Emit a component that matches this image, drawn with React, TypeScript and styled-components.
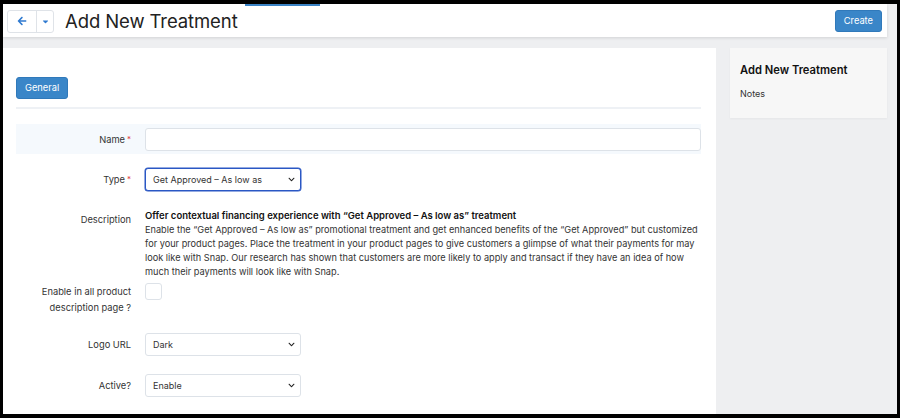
import styled, { createGlobalStyle } from 'styled-components';
import { FaArrowLeft, FaCaretDown, FaChevronDown } from 'react-icons/fa';

const GlobalStyle = createGlobalStyle`
  html, body {
    margin: 0;
    padding: 0;
    background: #000;
  }
  * {
    box-sizing: border-box;
  }
  body {
    font-family: Inter, 'Liberation Sans', Arial, sans-serif;
    color: #222;
  }
`;

interface SelectProps {
  value: string;
  focused?: boolean;
}

const Select = ({ value, focused }: SelectProps) => (
  <SelectWrapper>
    <SelectBox $focused={focused}>{value}</SelectBox>
    <Chevron>
      <FaChevronDown />
    </Chevron>
  </SelectWrapper>
);

const App = () => {
  return (
    <>
      <GlobalStyle />
      <Frame>
        <Header>
          <ActiveTab />
          <NavGroup>
            <NavButton $wide>
              <FaArrowLeft />
            </NavButton>
            <NavButton>
              <FaCaretDown />
            </NavButton>
          </NavGroup>
          <Title>Add New Treatment</Title>
          <PrimaryButton $right>Create</PrimaryButton>
        </Header>
        <Body>
          <MainCard>
            <TabBar>
              <PrimaryButton>General</PrimaryButton>
            </TabBar>
            <Divider />
            <FormRow $highlight $height={30} $gapTop={15}>
              <Label>
                Name<Required>*</Required>
              </Label>
              <TextInput />
            </FormRow>
            <FormRow $height={50}>
              <Label>
                Type<Required>*</Required>
              </Label>
              <Select value="Get Approved – As low as" focused />
            </FormRow>
            <FormRow $top $gapTop={5}>
              <Label $pad={3}>Description</Label>
              <Description>
                <strong>
                  Offer contextual financing experience with “Get Approved – As low as” treatment
                </strong>
                <p>
                  Enable the “Get Approved – As low as” promotional treatment and get enhanced
                  benefits of the “Get Approved” but customized for your product pages. Place the
                  treatment in your product pages to give customers a glimpse of what their payments
                  for may look like with Snap. Our research has shown that customers are more likely
                  to apply and transact if they have an idea of how much their payments will look
                  like with Snap.
                </p>
              </Description>
            </FormRow>
            <FormRow $top $gapTop={4}>
              <Label $pad={1} $lineHeight={16}>
                Enable in all product
                <br />
                description page ?
              </Label>
              <Checkbox />
            </FormRow>
            <FormRow $height={41} $gapTop={8}>
              <Label>Logo URL</Label>
              <Select value="Dark" />
            </FormRow>
            <FormRow $height={41}>
              <Label>Active?</Label>
              <Select value="Enable" />
            </FormRow>
          </MainCard>
          <SidePanel>
            <SideTitle>Add New Treatment</SideTitle>
            <SideText>Notes</SideText>
          </SidePanel>
        </Body>
      </Frame>
    </>
  );
};

export default App;

const Frame = styled.div`
  width: 900px;
  height: 418px;
  border-style: solid;
  border-color: #000;
  border-width: 4px 3px 4px 3px;
  background: #eeeff1;
  overflow: hidden;
  display: flex;
  flex-direction: column;
`;

const Header = styled.div`
  position: relative;
  height: 33px;
  margin-right: 10px;
  background: #fff;
  box-shadow: 0 1px 3px rgba(0, 0, 0, 0.12);
  display: flex;
  align-items: center;
  padding: 0 5px 0 4px;
  flex-shrink: 0;
`;

// blue underline of the active top tab
const ActiveTab = styled.div`
  position: absolute;
  top: 0;
  left: 242px;
  width: 75px;
  height: 2px;
  background: #3a82c4;
`;

const NavGroup = styled.div`
  display: flex;
  height: 23px;
  border: 1px solid #dfe3e8;
  border-radius: 3px;
  margin-top: 1px;
`;

const NavButton = styled.div<{ $wide?: boolean }>`
  width: ${(p) => (p.$wide ? '28px' : '17px')};
  display: flex;
  align-items: center;
  justify-content: center;
  color: #2f7ad0;
  font-size: ${(p) => (p.$wide ? '10px' : '9px')};
  & + & {
    border-left: 1px solid #dfe3e8;
  }
`;

const Title = styled.h1`
  margin: 0 0 0 11px;
  font-size: 18.5px;
  font-weight: 400;
  color: #222;
  letter-spacing: -0.1px;
`;

const PrimaryButton = styled.button<{ $right?: boolean }>`
  ${(p) => (p.$right ? 'margin-left: auto;' : '')}
  padding: 0 8px;
  height: 22px;
  background: #3a86c8;
  border: 1px solid #3079ba;
  border-radius: 3px;
  color: #fff;
  font-family: inherit;
  font-size: 9.3px;
  line-height: 20px;
`;

const Body = styled.div`
  flex: 1;
  display: flex;
  gap: 14px;
  padding-top: 11px;
  padding-right: 10px;
  min-height: 0;
`;

const MainCard = styled.div`
  width: 713px;
  background: #fff;
  padding: 29px 15px 0 13px;
  flex-shrink: 0;
`;

const TabBar = styled.div`
  display: flex;
`;

const Divider = styled.div`
  margin-top: 8px;
  height: 2px;
  background: #eef1f5;
`;

const FormRow = styled.div<{ $highlight?: boolean; $height?: number; $top?: boolean; $gapTop?: number }>`
  display: grid;
  grid-template-columns: 129px 1fr;
  align-items: ${(p) => (p.$top ? 'start' : 'center')};
  ${(p) => (p.$height ? `height: ${p.$height}px;` : '')}
  background: ${(p) => (p.$highlight ? '#f5f9fd' : 'transparent')};
  margin-top: ${(p) => p.$gapTop ?? 0}px;
`;

const Label = styled.div<{ $pad?: number; $lineHeight?: number }>`
  text-align: right;
  padding-right: 14px;
  padding-top: ${(p) => p.$pad ?? 0}px;
  font-size: 9.3px;
  line-height: ${(p) => p.$lineHeight ?? 15}px;
  color: #333;
`;

const Required = styled.span`
  color: #e0393e;
  font-size: 8px;
  margin-left: 2px;
  vertical-align: top;
`;

const TextInput = styled.div`
  width: 556px;
  height: 23px;
  border: 1px solid #dde2e8;
  border-radius: 3px;
  background: #fff;
`;

const SelectWrapper = styled.div`
  position: relative;
  width: 156px;
`;

const SelectBox = styled.div<{ $focused?: boolean }>`
  height: 23px;
  padding: 0 7px;
  border: 1px solid ${(p) => (p.$focused ? '#2a57c4' : '#dde2e8')};
  box-shadow: ${(p) => (p.$focused ? '0 0 0 0.5px #2a57c4' : 'none')};
  border-radius: 3px;
  background: #fff;
  font-size: 9px;
  line-height: 21px;
  color: #333;
`;

const Chevron = styled.span`
  position: absolute;
  right: 6px;
  top: 8px;
  font-size: 7px;
  color: #222;
  line-height: 1;
`;

const Description = styled.div`
  width: 560px;
  font-size: 9.2px;
  line-height: 14px;
  color: #333;
  & > strong {
    display: block;
    font-size: 9.5px;
    color: #111;
    font-weight: 600;
  }
  & > p {
    margin: 0;
  }
`;

const Checkbox = styled.div`
  width: 17px;
  height: 17px;
  border: 1px solid #dde2e8;
  border-radius: 3px;
  background: #fff;
`;

const SidePanel = styled.div`
  width: 157px;
  height: 70px;
  background: #f7f7f7;
  padding: 15px 10px;
  box-shadow: 0 1px 2px rgba(0, 0, 0, 0.04);
`;

const SideTitle = styled.div`
  font-size: 11.2px;
  font-weight: 600;
  color: #111;
`;

const SideText = styled.div`
  margin-top: 11px;
  font-size: 9px;
  color: #333;
`;
